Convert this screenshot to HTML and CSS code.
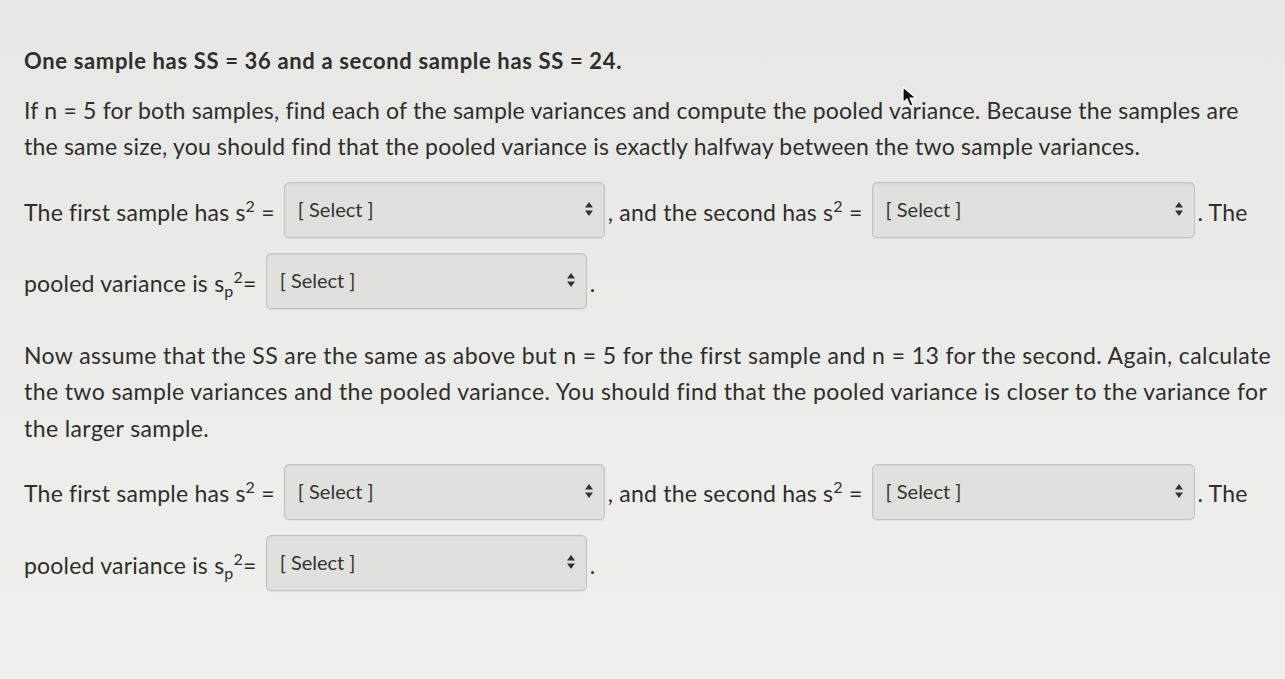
FILE: index.html
```html
<!DOCTYPE html>
<html>
<head>
<meta charset="utf-8">
<link rel="stylesheet" href="styles.css">
</head>
<body>
<div class="page">
  <p class="title">One sample has SS = 36 and a second sample has SS = 24.</p>
  <p>If n = 5 for both samples, find each of the sample variances and compute the pooled variance. Because the samples are the same size, you should find that the pooled variance is exactly halfway between the two sample variances.</p>
  <p class="answer">The first sample has s<sup>2</sup> = <span class="select sel-a"><span class="sel-text">[ Select ]</span><svg class="arrows" width="8" height="14" viewBox="0 0 8 14"><path d="M4 0 L8 5.5 L0 5.5 Z M4 14 L8 8.5 L0 8.5 Z" fill="#333"/></svg></span>, and the second has s<sup>2</sup> = <span class="select sel-b"><span class="sel-text">[ Select ]</span><svg class="arrows" width="8" height="14" viewBox="0 0 8 14"><path d="M4 0 L8 5.5 L0 5.5 Z M4 14 L8 8.5 L0 8.5 Z" fill="#333"/></svg></span>. The pooled variance is s<sub>p</sub><sup>2</sup>= <span class="select sel-a"><span class="sel-text">[ Select ]</span><svg class="arrows" width="8" height="14" viewBox="0 0 8 14"><path d="M4 0 L8 5.5 L0 5.5 Z M4 14 L8 8.5 L0 8.5 Z" fill="#333"/></svg></span>.</p>
  <p class="second">Now assume that the SS are the same as above but n = 5 for the first sample and n = 13 for the second. Again, calculate the two sample variances and the pooled variance. You should find that the pooled variance is closer to the variance for the larger sample.</p>
  <p class="answer">The first sample has s<sup>2</sup> = <span class="select sel-a"><span class="sel-text">[ Select ]</span><svg class="arrows" width="8" height="14" viewBox="0 0 8 14"><path d="M4 0 L8 5.5 L0 5.5 Z M4 14 L8 8.5 L0 8.5 Z" fill="#333"/></svg></span>, and the second has s<sup>2</sup> = <span class="select sel-b"><span class="sel-text">[ Select ]</span><svg class="arrows" width="8" height="14" viewBox="0 0 8 14"><path d="M4 0 L8 5.5 L0 5.5 Z M4 14 L8 8.5 L0 8.5 Z" fill="#333"/></svg></span>. The pooled variance is s<sub>p</sub><sup>2</sup>= <span class="select sel-a"><span class="sel-text">[ Select ]</span><svg class="arrows" width="8" height="14" viewBox="0 0 8 14"><path d="M4 0 L8 5.5 L0 5.5 Z M4 14 L8 8.5 L0 8.5 Z" fill="#333"/></svg></span>.</p>
</div>
<svg class="cursor" width="16" height="22" viewBox="0 0 16 22"><path d="M1 1 L1 17 L5 13 L8 20 L11 19 L8 12 L14 12 Z" fill="#111" stroke="#fff" stroke-width="1.2" stroke-linejoin="round"/></svg>
</body>
</html>
```
FILE: styles.css
```css
html, body {
  margin: 0;
  padding: 0;
}
body {
  width: 1285px;
  height: 679px;
  overflow: hidden;
  background: linear-gradient(180deg, #e7e7e4 0%, #ebebe7 50%, #f0f0ec 100%);
  font-family: Lato, "Open Sans", sans-serif;
  color: #2e2e2e;
  position: relative;
}
.page {
  width: 1250px;
  padding: 43px 0 0 24px;
}
p {
  margin: 0 0 12px 0;
  font-size: 23px;
  letter-spacing: 0.21px;
  line-height: 36.5px;
}
.title {
  font-weight: 700;
  font-size: 22px;
  letter-spacing: 0.65px;
}
.second {
  margin-top: 18px;
  letter-spacing: 0.4px;
}
.answer {
  line-height: 71px;
}
sup {
  font-size: 16px;
  vertical-align: 9px;
  line-height: 0;
}
sub {
  font-size: 16px;
  vertical-align: -5px;
  line-height: 0;
}
.select {
  display: inline-flex;
  align-items: center;
  justify-content: space-between;
  box-sizing: border-box;
  height: 56px;
  vertical-align: middle;
  margin: 0 3px 10px 3px;
  padding: 0 11px 1px 13px;
  border: 1px solid #c2c2be;
  border-radius: 5px;
  background: #e0e0dc;
  box-shadow: inset 0 1px 2px rgba(0,0,0,0.06), 0 1px 1px rgba(0,0,0,0.05);
  line-height: 1;
  letter-spacing: 0;
}
.sel-a {
  width: 321px;
}
.sel-b {
  width: 323px;
}
.sel-text {
  font-size: 20px;
  color: #333;
}
.arrows {
  display: block;
}
.cursor {
  position: absolute;
  left: 902px;
  top: 86px;
}
```
